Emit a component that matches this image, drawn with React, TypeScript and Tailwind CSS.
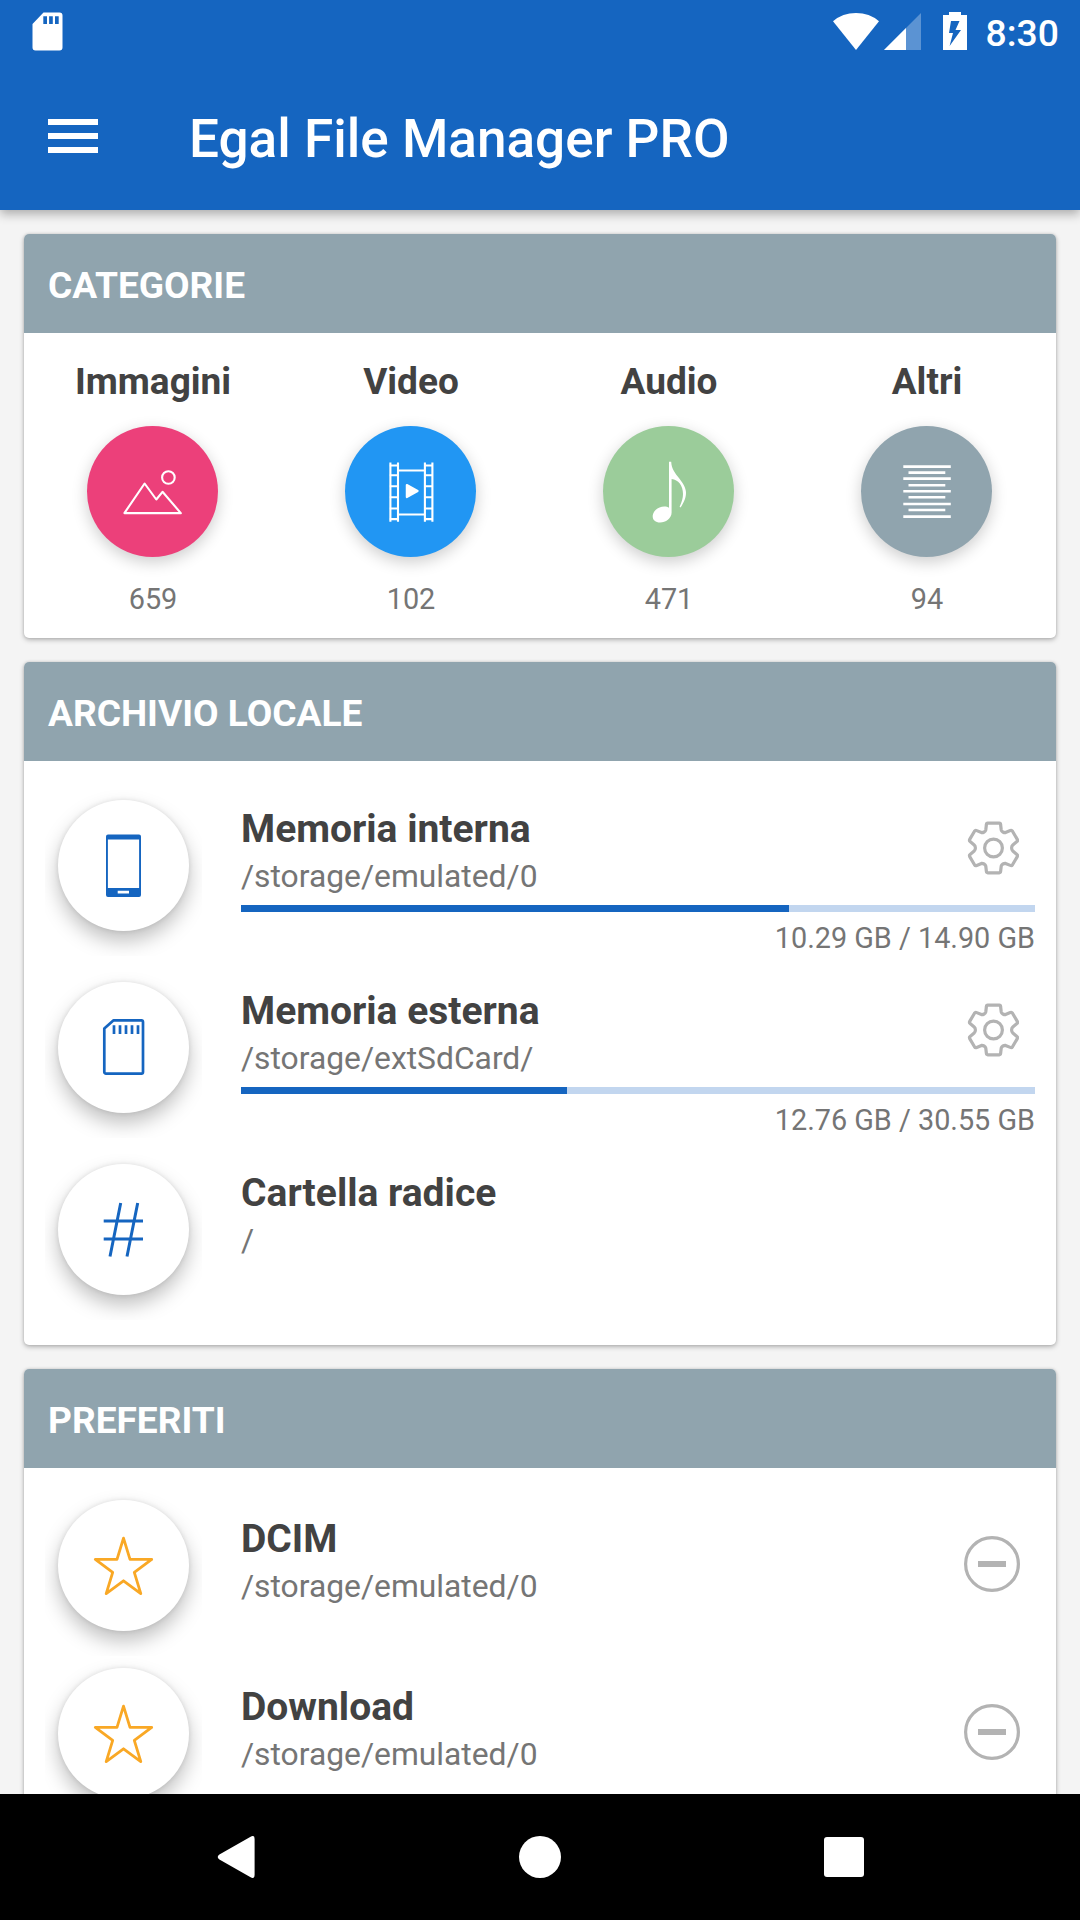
import type { ReactNode } from 'react';

const ImageIcon = () => (
    <svg viewBox="-0.8 -0.5 131 131" className="w-full h-full" fill="none" stroke="white" strokeWidth="2.1" strokeLinejoin="round">
        <path d="M36.6 86.6L56.8 57L68.5 73L74.7 65.3L93 86.6Z" />
        <circle cx="80.6" cy="51" r="6.3" />
    </svg>
);

const VideoIcon = () => (
    <svg viewBox="-0.8 -0.5 131 131" className="w-full h-full" fill="none" stroke="white" strokeWidth="2.1">
        <path d="M44.6 36V95.3M52.2 36V95.3M79.1 36V95.3M86.6 36V95.3M52 44H79M52 88H79" />
        <path d="M44 39h8M44 48.7h8M44 59.8h8M44 70.8h8M44 82h8M44 92.6h8M79 39h8M79 48.7h8M79 59.8h8M79 70.8h8M79 82h8M79 92.6h8" />
        <path d="M61 58.5L71.8 64.5L61 70.6Z" fill="white" strokeLinejoin="round" />
    </svg>
);

const AudioIcon = () => (
    <svg viewBox="-0.8 -0.5 131 131" className="w-full h-full" fill="white">
        <path d="M65.2 35.2h2.2c.2 7 4.3 12 8.3 17c4 5.3 6.5 9.5 6.5 14c0 6-2.8 10.5-5.4 14.8l-1-.8c2.3-4.5 3.4-8.6 3.4-12.6C79.2 59 74.5 53 67.8 52.4V86c0 6-6 10-11.5 10c-4.5 0-7.4-2.4-7.4-6c0-5.5 5.7-10 11.5-10c2 0 3.6.4 4.8 1.2Z" />
    </svg>
);

const OtherIcon = () => (
    <svg viewBox="-0.3 -0.3 131 131" className="w-full h-full" fill="none" stroke="white" strokeWidth="2.6">
        <path d="M42 40.3H89.5M42 52.3H89.5M42 65H89.5M42 77.7H89.5M42 90.3H89.5" />
        <path d="M47.2 46.3H84M47.2 59H84M47.2 71H84M47.2 83.7H84" />
    </svg>
);

const PhoneIcon = () => (
    <svg viewBox="0 0 131 131" className="w-full h-full" fill="#1565c0">
        <path
            fillRule="evenodd"
            d="M50 34.6H81a2 2 0 0 1 2 2V95a2 2 0 0 1-2 2H50a2 2 0 0 1-2-2V36.6a2 2 0 0 1 2-2ZM49.9 39.6V87.9H81.1V39.6ZM59.7 90.8V93.6H71V90.8Z"
        />
    </svg>
);

const SdIcon = () => (
    <svg viewBox="0 0 131 131" className="w-full h-full" fill="none" stroke="#1565c0" strokeWidth="2.7" strokeLinejoin="round">
        <path d="M55.6 38.3H83.4a1.6 1.6 0 0 1 1.6 1.6V90a1.6 1.6 0 0 1-1.6 1.6H47.9a1.6 1.6 0 0 1-1.6-1.6V46.5Z" />
        <path d="M56 43.2V52.1M62 43.2V52.1M68 43.2V52.1M74 43.2V52.1M80 43.2V52.1" />
    </svg>
);

const HashIcon = () => (
    <svg viewBox="0 0 131 131" className="w-full h-full" fill="none" stroke="#1565c0" strokeWidth="3">
        <path d="M45.7 57.1H85M45.7 75H85M62.7 39L52 92.5M79.7 39L69 92.5" />
    </svg>
);

const StarIcon = () => (
    <svg viewBox="0 0 131 131" className="w-full h-full" fill="none" stroke="#f9a825" strokeWidth="2.8" strokeLinejoin="round">
        <path d="M65.5 38.2L72 59.4H93.7L76.3 72.4L82.8 93.6L65.5 80.8L48.2 93.6L54.7 72.4L37.3 59.4H59Z" />
    </svg>
);

const GearIcon = () => (
    <svg viewBox="-26.5 -27 52 54" className="w-[52px] h-[54px]" fill="none" stroke="#b3b3b3" strokeWidth="3.2" strokeLinejoin="round">
        <path d="M-5.8 -24.8H5.8Q7 -24.8 7.1 -23.5L7.7 -18.2Q8 -16.8 9.4 -16T12 -15.4L16.8 -17.4Q18.2 -18 19 -16.8L23.8 -8.6Q24.4 -7.2 23.4 -6.4L19.3 -3Q18.1 -2 18.1 0T19.3 3L23.4 6.4Q24.4 7.2 23.8 8.6L19 16.8Q18.2 18 16.8 17.4L12 15.4Q10.8 15.2 9.4 16T7.7 18.2L7.1 23.5Q7 24.8 5.8 24.8H-5.8Q-7 24.8 -7.1 23.5L-7.7 18.2Q-8 16.8 -9.4 16T-12 15.4L-16.8 17.4Q-18.2 18 -19 16.8L-23.8 8.6Q-24.4 7.2 -23.4 6.4L-19.3 3Q-18.1 2 -18.1 0T-19.3 -3L-23.4 -6.4Q-24.4 -7.2 -23.8 -8.6L-19 -16.8Q-18.2 -18 -16.8 -17.4L-12 -15.4Q-10.8 -15.2 -9.4 -16T-7.7 -18.2L-7.1 -23.5Q-7 -24.8 -5.8 -24.8Z" />
        <circle r="8.9" />
    </svg>
);

const RemoveIcon = () => (
    <svg viewBox="0 0 56 56" className="w-14 h-14" fill="none" stroke="#b3b3b3">
        <circle cx="28" cy="28" r="26.4" strokeWidth="3.2" />
        <path d="M14 28H42" strokeWidth="6" />
    </svg>
);

const StatusBar = () => (
    <div className="flex h-[72px] items-start justify-between pl-8 pr-[21px] text-white">
        <svg viewBox="0 0 31 39" className="mt-3 h-[39px] w-[31px]" fill="white">
            <path
                fillRule="evenodd"
                d="M11.5 .5H27.5A3 3 0 0 1 30.5 3.5V35.5A3 3 0 0 1 27.5 38.5H3.5A3 3 0 0 1 .5 35.5V12ZM11.3 4.2V12H15V4.2ZM17.1 4.2V12H20.8V4.2ZM23 4.2V12H26.7V4.2Z"
            />
        </svg>
        <div className="flex items-start">
            <svg viewBox="0 0 46 37" className="mt-[13px] h-[37px] w-[46px]" fill="white">
                <path d="M23 37L0 8.2Q9.5 0 23 0T46 8.2Z" />
            </svg>
            <svg viewBox="0 0 37 37" className="ml-[5px] mt-[13px] h-[37px] w-[37px]" fill="white">
                <path d="M37 0V37H0Z" opacity=".3" />
                <path d="M22 15V37H0Z" />
            </svg>
            <svg viewBox="0 0 24 38" className="ml-[22px] mt-3 h-[38px] w-6" fill="white">
                <path fillRule="evenodd" d="M6 0H18V3H24V38H0V3H6ZM8 9L6 21H10L6.6 34L18 18H12.5L16.5 9Z" />
            </svg>
            <span className="ml-[19px] mt-[9px] text-[37.3px] font-medium leading-[48px]">8:30</span>
        </div>
    </div>
);

const Toolbar = () => (
    <div className="flex h-[138px] items-center pb-[5px] pl-12">
        <div className="mb-[5px] flex w-[50px] flex-col gap-[8.4px]">
            <div className="h-[5.7px] bg-white" />
            <div className="h-[5.7px] bg-white" />
            <div className="h-[5.7px] bg-white" />
        </div>
        <h1 className="ml-[91px] text-[53.1px] font-medium leading-[60px] text-white">Egal File Manager PRO</h1>
    </div>
);

const Card = ({ title, children }: { title: string; children: ReactNode }) => (
    <section className="shrink-0 rounded-[5px] bg-white shadow-[0_2px_5px_rgba(0,0,0,0.26),0_0_3px_rgba(0,0,0,0.14)]">
        <h2 className="h-[99px] rounded-t-[5px] bg-[#90a4ae] pl-6 pt-1 text-[37.1px] font-bold leading-[95px] text-white">{title}</h2>
        {children}
    </section>
);

const categories = [
    { label: 'Immagini', count: 659, color: 'bg-[#ec407a]', icon: <ImageIcon /> },
    { label: 'Video', count: 102, color: 'bg-[#2196f3]', icon: <VideoIcon /> },
    { label: 'Audio', count: 471, color: 'bg-[#9bcc9a]', icon: <AudioIcon /> },
    { label: 'Altri', count: 94, color: 'bg-[#90a4ae]', icon: <OtherIcon /> },
];

const storages = [
    { name: 'Memoria interna', path: '/storage/emulated/0', used: 69, usage: '10.29 GB / 14.90 GB', icon: <PhoneIcon /> },
    { name: 'Memoria esterna', path: '/storage/extSdCard/', used: 41, usage: '12.76 GB / 30.55 GB', icon: <SdIcon /> },
    { name: 'Cartella radice', path: '/', icon: <HashIcon /> },
];

const favorites = [
    { name: 'DCIM', path: '/storage/emulated/0' },
    { name: 'Download', path: '/storage/emulated/0' },
];

// The wrapper cuts the shadow off at the edges of the button's own box
const RoundButton = ({ children }: { children: ReactNode }) => (
    <div className="h-[166px] w-[157px] shrink-0 overflow-hidden px-[13px] pt-[10px]">
        <button className="block h-[131px] w-[131px] rounded-full bg-white shadow-[0_10px_20px_rgba(0,0,0,0.25),0_0_5px_rgba(0,0,0,0.1)]">
            {children}
        </button>
    </div>
);

const ItemText = ({ name, path }: { name: string; path: string }) => (
    <div>
        <div className="text-[39px] font-bold leading-[46px] text-[#424242]">{name}</div>
        <div className="mt-1 text-[31.8px] leading-[40px] text-[#757575]">{path}</div>
    </div>
);

const App = () => {
    return (
        <div className="flex h-[1920px] w-[1080px] flex-col overflow-hidden bg-[#f4f4f4] font-['Roboto',sans-serif]">
            <header className="z-10 h-[210px] shrink-0 bg-[#1565c0] shadow-[0_4px_10px_rgba(0,0,0,0.3)]">
                <StatusBar />
                <Toolbar />
            </header>

            <main className="flex min-h-0 flex-1 flex-col gap-6 overflow-hidden px-6 pt-6">
                <Card title="CATEGORIE">
                    <div className="grid h-[305px] grid-cols-4 pt-[27px]">
                        {categories.map((c) => (
                            <div key={c.label} className="flex flex-col items-center">
                                <div className="text-[37px] font-bold leading-[44px] text-[#424242]">{c.label}</div>
                                <button className={`mt-[22px] mr-px h-[131px] w-[131px] rounded-full shadow-[0_5px_16px_rgba(0,0,0,0.2)] ${c.color}`}>
                                    {c.icon}
                                </button>
                                <div className="mt-[25px] text-[28.875px] leading-[34px] text-[#757575]">{c.count}</div>
                            </div>
                        ))}
                    </div>
                </Card>

                <Card title="ARCHIVIO LOCALE">
                    <div className="h-[584px] pt-[29px]">
                        {storages.map((s) => (
                            <div key={s.name} className="flex h-[182px] items-start pl-[21px] pr-[21px]">
                                <RoundButton>{s.icon}</RoundButton>
                                <div className="ml-[39px] flex-1 pt-4">
                                    <div className="flex items-start justify-between">
                                        <ItemText name={s.name} path={s.path} />
                                        {s.usage && (
                                            <button className="mr-4 mt-[15px]">
                                                <GearIcon />
                                            </button>
                                        )}
                                    </div>
                                    {s.usage && (
                                        <>
                                            <div className="mt-[9px] h-[7px] bg-[#c2d6ef]">
                                                <div className="h-full bg-[#1565c0]" style={{ width: `${s.used}%` }} />
                                            </div>
                                            <div className="mt-[9px] text-right text-[28.8px] leading-[34px] text-[#757575]">{s.usage}</div>
                                        </>
                                    )}
                                </div>
                            </div>
                        ))}
                    </div>
                </Card>

                <Card title="PREFERITI">
                    <div className="pt-[22px]">
                        {favorites.map((f) => (
                            <div key={f.name} className="flex h-[168px] items-start pl-[21px] pr-9">
                                <RoundButton>
                                    <StarIcon />
                                </RoundButton>
                                <div className="ml-[39px] flex flex-1 items-start justify-between pt-[26px]">
                                    <ItemText name={f.name} path={f.path} />
                                    <button className="mt-5">
                                        <RemoveIcon />
                                    </button>
                                </div>
                            </div>
                        ))}
                    </div>
                </Card>
            </main>

            <nav className="z-10 flex h-[126px] shrink-0 items-center bg-black pl-[217px]">
                <svg viewBox="0 0 38 42" className="h-[42px] w-[38px]" fill="white">
                    <path d="M33.6 .8Q37.6 -1.6 37.6 3V39Q37.6 43.6 33.6 41.2L2.4 23.5Q-1 21 2.4 18.5Z" />
                </svg>
                <div className="ml-[264px] h-[42px] w-[42px] rounded-full bg-white" />
                <div className="ml-[263px] h-10 w-10 rounded-[3px] bg-white" />
            </nav>
        </div>
    );
};

export default App;
